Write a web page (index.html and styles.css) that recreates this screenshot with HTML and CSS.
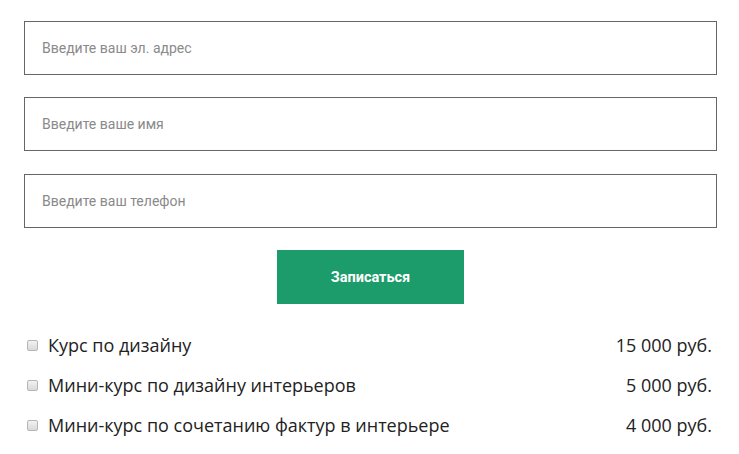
FILE: index.html
```html
<!DOCTYPE html>
<html lang="ru">
<head>
    <meta charset="UTF-8">
    <meta name="viewport" content="width=device-width, initial-scale=1.0">
    <title>Запись на курс</title>
    <link rel="stylesheet" href="styles.css">
</head>
<body>
    <form class="signup-form" action="#" method="post">
        <input type="email" class="field" name="email" placeholder="Введите ваш эл. адрес">
        <input type="text" class="field" name="name" placeholder="Введите ваше имя">
        <input type="tel" class="field" name="phone" placeholder="Введите ваш телефон">
        <button type="submit" class="submit-btn">Записаться</button>

        <ul class="courses">
            <li class="course">
                <label><input type="checkbox" name="course" value="1"><span>Курс по дизайну</span></label>
                <span class="price">15 000 руб.</span>
            </li>
            <li class="course">
                <label><input type="checkbox" name="course" value="2"><span>Мини-курс по дизайну интерьеров</span></label>
                <span class="price">5 000 руб.</span>
            </li>
            <li class="course">
                <label><input type="checkbox" name="course" value="3"><span>Мини-курс по сочетанию фактур в интерьере</span></label>
                <span class="price">4 000 руб.</span>
            </li>
        </ul>
    </form>
</body>
</html>
```

FILE: styles.css
```css
body {
    margin: 0;
    padding: 0;
    background-color: #fff;
    font-family: "Open Sans", "Liberation Sans", sans-serif;
}

.signup-form {
    display: flex;
    flex-direction: column;
    align-items: center;
    width: 693px;
    padding: 21px 0 0 24px;
}

.field {
    box-sizing: border-box;
    width: 100%;
    height: 54px;
    margin: 0 0 22px 0;
    padding: 0 17px;
    border: 1px solid #666;
    border-radius: 0;
    font-family: Roboto, sans-serif;
    font-size: 14px;
    color: #333;
    outline: none;
}
.field:nth-child(2) {
    margin-bottom: 23px;
}
.field::placeholder {
    color: #8a8a8a;
}

.submit-btn {
    width: 187px;
    height: 54px;
    border: none;
    background-color: #1b9c6a;
    color: #fff;
    font-family: Roboto, sans-serif;
    font-weight: 700;
    font-size: 14.5px;
    cursor: pointer;
}

.courses {
    list-style: none;
    width: 100%;
    margin: 21px 0 0 0;
    padding: 0;
}
.course {
    display: flex;
    justify-content: space-between;
    align-items: center;
    height: 40px;
    padding: 0 5px 0 3px;
    font-size: 18px;
    color: #222;
}
.course label {
    display: flex;
    align-items: center;
    gap: 10px;
}
.course input[type="checkbox"] {
    appearance: none;
    -webkit-appearance: none;
    box-sizing: border-box;
    width: 11px;
    height: 11px;
    margin: 1px 0 0 0;
    border: 1px solid #b5b5b5;
    border-radius: 2px;
    background: linear-gradient(#f2f2f2, #d9d9d9);
}
.course input[type="checkbox"]:checked {
    background: #1b9c6a;
    border-color: #1b9c6a;
}
```
